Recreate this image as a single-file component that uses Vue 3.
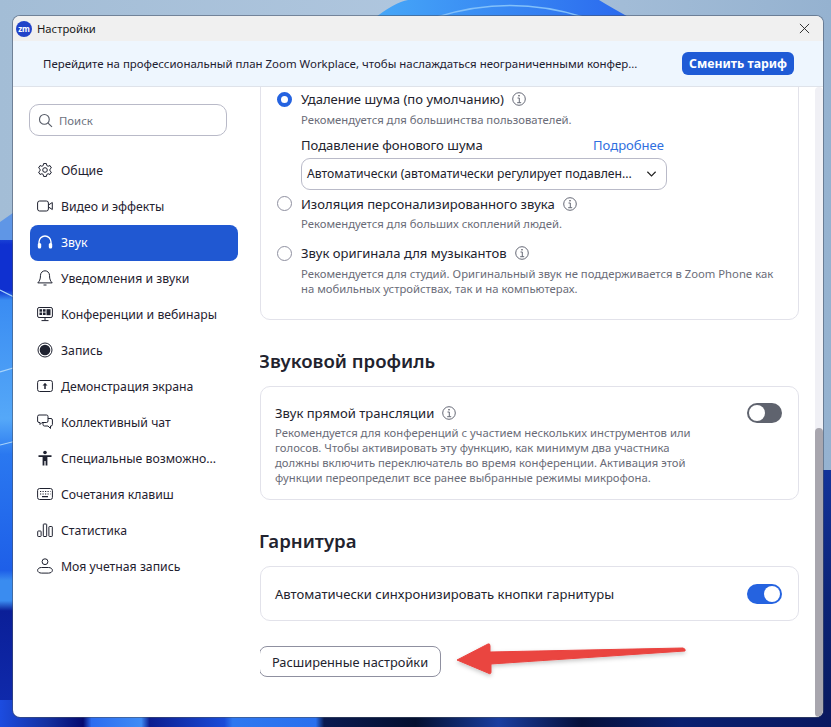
<script setup>
const navItems = [
  { label: 'Общие', icon: 'gear' },
  { label: 'Видео и эффекты', icon: 'video' },
  { label: 'Звук', icon: 'headset', active: true },
  { label: 'Уведомления и звуки', icon: 'bell' },
  { label: 'Конференции и вебинары', icon: 'monitor' },
  { label: 'Запись', icon: 'record' },
  { label: 'Демонстрация экрана', icon: 'share' },
  { label: 'Коллективный чат', icon: 'chat' },
  { label: 'Специальные возможно...', icon: 'access' },
  { label: 'Сочетания клавиш', icon: 'keyboard' },
  { label: 'Статистика', icon: 'stats' },
  { label: 'Моя учетная запись', icon: 'user' },
]
</script>

<template>
  <div class="desktop">
    <svg class="wallpaper" viewBox="0 0 831 727" preserveAspectRatio="none" aria-hidden="true">
      <defs>
        <linearGradient id="sky" x1="0" y1="0" x2="1" y2="0">
          <stop offset="0" stop-color="#a3bdd6" />
          <stop offset="0.5" stop-color="#afc6de" />
          <stop offset="1" stop-color="#95b2d0" />
        </linearGradient>
        <linearGradient id="bloom" x1="0" y1="0" x2="1" y2="0">
          <stop offset="0" stop-color="#46a8f8" />
          <stop offset="1" stop-color="#2a68ee" />
        </linearGradient>
        <linearGradient id="lower" x1="0" y1="0" x2="1" y2="0">
          <stop offset="0" stop-color="#1c4ce0" />
          <stop offset="0.058" stop-color="#14309f" />
          <stop offset="0.1" stop-color="#050a70" />
          <stop offset="0.11" stop-color="#2c6cf0" />
          <stop offset="0.17" stop-color="#3f8cf5" />
          <stop offset="0.18" stop-color="#0d1e90" />
          <stop offset="0.27" stop-color="#1a4cd8" />
          <stop offset="0.28" stop-color="#2e78f0" />
          <stop offset="0.38" stop-color="#2a70ee" />
          <stop offset="0.39" stop-color="#0a1a50" />
          <stop offset="0.5" stop-color="#041030" />
          <stop offset="0.6" stop-color="#1a3ea0" />
          <stop offset="0.7" stop-color="#06103a" />
          <stop offset="0.82" stop-color="#0a2070" />
          <stop offset="1" stop-color="#0a1860" />
        </linearGradient>
        <linearGradient id="leftBand" x1="0" y1="0" x2="0" y2="1">
          <stop offset="0" stop-color="#3c7fe8" />
          <stop offset="0.045" stop-color="#0f30d0" />
          <stop offset="0.135" stop-color="#0f30d0" />
          <stop offset="0.155" stop-color="#3a8cf2" />
          <stop offset="0.39" stop-color="#55a8f8" />
          <stop offset="0.46" stop-color="#2a78f0" />
          <stop offset="0.69" stop-color="#1e5fe8" />
          <stop offset="0.71" stop-color="#3a8cf0" />
          <stop offset="0.75" stop-color="#3a8cf0" />
          <stop offset="0.77" stop-color="#0b1f98" />
          <stop offset="1" stop-color="#102cb0" />
        </linearGradient>
        <linearGradient id="rightBand" x1="0" y1="0" x2="0" y2="1">
          <stop offset="0" stop-color="#14339a" />
          <stop offset="0.5" stop-color="#0c2478" />
          <stop offset="1" stop-color="#081a5e" />
        </linearGradient>
      </defs>
      <rect width="831" height="727" fill="url(#sky)" />
      <path d="M372 20 Q 395 2 408 0 L 599 0 Q 612 8 634 20 Z" fill="url(#bloom)" />
      <path d="M437 17 Q 510 -6 583 17" fill="none" stroke="#82c0fa" stroke-width="1.500" />
      <rect x="0" y="222" width="20" height="505" fill="url(#leftBand)" />
      <path d="M0 222 L 20 208 L 20 240 L 0 240 Z" fill="#5f96e6" />
      <path d="M0 290 L 20 300 M0 372 L 20 366 M0 445 L 20 440" stroke="#a8d4fb" stroke-width="1.200" fill="none" />
      <rect x="815" y="470" width="16" height="257" fill="url(#rightBand)" />
      <rect x="0" y="700" width="831" height="27" fill="url(#lower)" />
    </svg>

    <div class="window">
      <header class="titlebar">
        <span class="logo">zm</span>
        <span class="title">Настройки</span>
        <svg class="close" viewBox="0 0 12 12" aria-label="Закрыть"><path d="M1 1l10 10M11 1L1 11" /></svg>
      </header>

      <div class="banner">
        <span class="banner-text">Перейдите на профессиональный план Zoom Workplace, чтобы наслаждаться неограниченными конфер...</span>
        <button class="upgrade">Сменить тариф</button>
      </div>

      <div class="body">
        <aside class="sidebar">
          <div class="search">
            <svg viewBox="0 0 16 16" class="search-icon"><circle cx="6.800" cy="6.800" r="5.200" /><path d="M10.700 10.700l4.200 4.200" /></svg>
            <span>Поиск</span>
          </div>
          <nav class="nav">
            <div v-for="item in navItems" :key="item.label" class="nav-item" :class="{ active: item.active }">
              <svg class="nav-icon" viewBox="0 0 16 16">
                <template v-if="item.icon === 'gear'">
                  <g transform="translate(0 .75)">
                    <path d="M6.600 .8h2.800l.4 2 1.300.7 1.900-.7 1.400 2.400-1.500 1.300v1.500l1.500 1.300-1.400 2.400-1.900-.7-1.300.7-.4 2H6.600l-.4-2-1.300-.7-1.900.7L1.600 9.300l1.500-1.300V6.500L1.600 5.200 3 2.800l1.900.7 1.300-.7z" />
                    <circle cx="8" cy="7.250" r="2.300" />
                  </g>
                </template>
                <template v-else-if="item.icon === 'video'">
                  <rect x=".6" y="3" width="10.800" height="10" rx="2" />
                  <path d="M11.500 7l3.800-2.500v7L11.500 9" />
                </template>
                <template v-else-if="item.icon === 'headset'">
                  <path d="M2 10V8a6 6 0 0 1 12 0v2" stroke-width="1.400" />
                  <rect x=".8" y="9" width="3.400" height="5.500" rx="1.500" class="solid" />
                  <rect x="11.800" y="9" width="3.400" height="5.500" rx="1.500" class="solid" />
                </template>
                <template v-else-if="item.icon === 'bell'">
                  <path d="M8 .8a4.500 4.500 0 0 0-4.500 4.500c0 4.400-1.200 5.900-2.700 7.600h14.400c-1.500-1.700-2.700-3.200-2.700-7.600A4.500 4.500 0 0 0 8 .8z" />
                  <path d="M6.500 15h3" />
                </template>
                <template v-else-if="item.icon === 'monitor'">
                  <rect x=".6" y="1.500" width="14.800" height="10" rx="1.500" />
                  <rect x="2.500" y="3.200" width="2.600" height="2.500" class="solid" />
                  <rect x="6" y="3.200" width="2.600" height="2.500" class="solid" />
                  <rect x="9.500" y="3.200" width="4" height="6" class="solid" />
                  <rect x="2.500" y="6.500" width="2.600" height="2.500" class="solid" />
                  <rect x="6" y="6.500" width="2.600" height="2.500" class="solid" />
                  <path d="M8 11.500v3M4.500 14.600h7" />
                </template>
                <template v-else-if="item.icon === 'record'">
                  <circle cx="8" cy="8" r="7" />
                  <circle cx="8" cy="8" r="5.300" class="solid" />
                </template>
                <template v-else-if="item.icon === 'share'">
                  <rect x=".6" y="2.500" width="14.800" height="11" rx="2" />
                  <path d="M8 11V5.800" stroke-width="1.500" />
                  <path d="M5.500 7.500L8 5l2.500 2.500z" class="solid" />
                </template>
                <template v-else-if="item.icon === 'chat'">
                  <path d="M2 1h7.500A1.500 1.500 0 0 1 11 2.500V7a1.500 1.500 0 0 1-1.500 1.500H5L3 10.500v-2H2A1.500 1.500 0 0 1 .6 7V2.500A1.500 1.500 0 0 1 2 1z" />
                  <path d="M11 4.500h3A1.500 1.500 0 0 1 15.400 6v4.500A1.500 1.500 0 0 1 14 12h-.5v2.500L11 12H7.500A1.500 1.500 0 0 1 6 10.500V9" />
                </template>
                <template v-else-if="item.icon === 'access'">
                  <circle cx="8" cy="2.500" r="1.800" class="solid" />
                  <path d="M1.500 5.200h13v1.700H10.400V15.500H8.600V11H7.400v4.500H5.600V6.900H1.500z" class="solid" />
                </template>
                <template v-else-if="item.icon === 'keyboard'">
                  <rect x=".6" y="2.500" width="14.800" height="11" rx="2" />
                  <path d="M3 5.500h1.200M5.500 5.500h1.200M8 5.500h1.200M10.500 5.500h1.200M13 5.500h.5M3 8h1.200M5.500 8h1.200M8 8h1.200M10.500 8h1.200M13 8h.5M5 10.700h6" stroke-width="1.200" />
                </template>
                <template v-else-if="item.icon === 'stats'">
                  <rect x=".7" y="9" width="3.400" height="5.500" rx=".6" />
                  <rect x="6.300" y="2" width="3.400" height="12.500" rx=".6" />
                  <rect x="11.900" y="4.500" width="3.400" height="10" rx=".6" />
                </template>
                <template v-else>
                  <circle cx="8" cy="3.700" r="2.900" />
                  <path d="M4.500 9.500h7c2.200 0 3.900 1.200 3.900 2.800s-1.700 2.800-3.900 2.800h-7C2.300 15.100.6 13.900.6 12.300S2.300 9.500 4.500 9.500z" />
                </template>
              </svg>
              <span>{{ item.label }}</span>
            </div>
          </nav>
        </aside>

        <main class="content">
          <section class="card card-clipped">
            <div class="option">
              <span class="radio checked"></span>
              <div class="option-line">
                <span class="label">Удаление шума (по умолчанию)</span>
                <svg class="info" viewBox="0 0 14 14"><circle cx="7" cy="7" r="6.300" /><path d="M5.500 6h1.800v4.500M5.200 10.700h4" /><circle cx="7" cy="3.800" r=".7" class="solid" /></svg>
              </div>
            </div>
            <p class="hint hint-near">Рекомендуется для большинства пользователей.</p>
            <div class="suppress">
              <div class="suppress-head">
                <span class="label">Подавление фонового шума</span>
                <a class="more">Подробнее</a>
              </div>
              <div class="select">
                <span>Автоматически (автоматически регулирует подавлен...</span>
                <svg viewBox="0 0 12 8" class="chev"><path d="M1.500 1.500L6 6l4.500-4.500" /></svg>
              </div>
            </div>
            <div class="option opt-iso">
              <span class="radio"></span>
              <div class="option-line">
                <span class="label">Изоляция персонализированного звука</span>
                <svg class="info" viewBox="0 0 14 14"><circle cx="7" cy="7" r="6.300" /><path d="M5.500 6h1.800v4.500M5.200 10.700h4" /><circle cx="7" cy="3.800" r=".7" class="solid" /></svg>
              </div>
            </div>
            <p class="hint hint-near">Рекомендуется для больших скоплений людей.</p>
            <div class="option opt-orig">
              <span class="radio"></span>
              <div class="option-line">
                <span class="label">Звук оригинала для музыкантов</span>
                <svg class="info" viewBox="0 0 14 14"><circle cx="7" cy="7" r="6.300" /><path d="M5.500 6h1.800v4.500M5.200 10.700h4" /><circle cx="7" cy="3.800" r=".7" class="solid" /></svg>
              </div>
            </div>
            <p class="hint hint-far">Рекомендуется для студий. Оригинальный звук не поддерживается в Zoom Phone как<br />на мобильных устройствах, так и на компьютерах.</p>
          </section>

          <h2 class="heading">Звуковой профиль</h2>
          <section class="card card-live">
            <div class="live-text">
              <div class="option-line">
                <span class="label">Звук прямой трансляции</span>
                <svg class="info" viewBox="0 0 14 14"><circle cx="7" cy="7" r="6.300" /><path d="M5.500 6h1.800v4.500M5.200 10.700h4" /><circle cx="7" cy="3.800" r=".7" class="solid" /></svg>
              </div>
              <p class="hint live-hint">Рекомендуется для конференций с участием нескольких инструментов или<br />голосов. Чтобы активировать эту функцию, как минимум два участника<br />должны включить переключатель во время конференции. Активация этой<br />функции переопределит все ранее выбранные режимы микрофона.</p>
            </div>
            <span class="toggle"></span>
          </section>

          <h2 class="heading heading-second">Гарнитура</h2>
          <section class="card card-head">
            <span class="label">Автоматически синхронизировать кнопки гарнитуры</span>
            <span class="toggle on"></span>
          </section>

          <button class="advanced">Расширенные настройки</button>
        </main>

        <div class="scrollbar"><div class="thumb"></div></div>
      </div>
    </div>

    <svg class="arrow" viewBox="0 0 831 727" aria-hidden="true">
      <defs>
        <filter id="arrowShadow" x="-10%" y="-30%" width="120%" height="170%">
          <feDropShadow dx="0" dy="2" stdDeviation="2" flood-color="#000" flood-opacity=".22" />
        </filter>
      </defs>
      <path d="M457 660 L 488 644 Q 490 643 490 646 L 490 652 L 683 648 Q 686 649 685 651 L 491 664 L 491 672 Q 491 675 488 673 Z" fill="#ea4440" stroke="#ea4440" stroke-linejoin="round" filter="url(#arrowShadow)" />
    </svg>
  </div>
</template>

<style scoped>
.desktop {
  position: relative;
  width: 831px;
  height: 727px;
  padding: 16px 8px 10px 13px;
  box-sizing: border-box;
  overflow: hidden;
  font-family: "Noto Sans", "Open Sans", sans-serif;
  color: #1f2230;
}
.wallpaper, .arrow {
  position: absolute;
  left: 0;
  top: 0;
  width: 831px;
  height: 727px;
}
.arrow { pointer-events: none; }
.window {
  position: relative;
  height: 100%;
  display: flex;
  flex-direction: column;
  background: #fff;
  border-radius: 7px;
  overflow: hidden;
  box-shadow: 0 0 0 1px rgba(70, 80, 100, .55);
}
.titlebar {
  height: 25px;
  flex: none;
  display: flex;
  align-items: center;
  padding: 0 13px 0 3px;
  background: #f0f0f0;
  font-size: 11.250px;
}
.logo {
  width: 16px;
  height: 16px;
  border-radius: 50%;
  background: #2143c9;
  color: #fff;
  font-size: 8px;
  line-height: 15px;
  text-align: center;
  font-weight: 700;
  margin-right: 5px;
}
.title { flex: 1; color: #1a1a1a; }
.close {
  width: 11px;
  height: 11px;
  fill: none;
  stroke: #222;
  stroke-width: 1;
}
.banner {
  height: 46px;
  flex: none;
  box-sizing: border-box;
  display: flex;
  align-items: center;
  justify-content: space-between;
  padding: 0 29px 0 30px;
  background: #eef6fe;
  border-bottom: 1px solid #dfe3ea;
}
.banner-text {
  font-size: 11.440px;
  color: #1d2030;
  white-space: nowrap;
}
.upgrade {
  width: 112px;
  height: 23px;
  border: 0;
  border-radius: 6px;
  background: #1f5bd6;
  color: #fff;
  font: 700 12.300px "Noto Sans", sans-serif;
  padding: 0;
}
.body {
  flex: 1;
  display: flex;
  min-height: 0;
}
.sidebar {
  width: 247px;
  flex: none;
  box-sizing: border-box;
  padding: 17px 22px 0 16px;
}
.search {
  width: 198px;
  height: 32px;
  box-sizing: border-box;
  display: flex;
  align-items: center;
  gap: 6px;
  padding-left: 8px;
  border: 1px solid #b9bac8;
  border-radius: 10px;
  font-size: 11.400px;
  color: #6e7280;
}
.search-icon {
  width: 15px;
  height: 15px;
  fill: none;
  stroke: #555a66;
  stroke-width: 1.200;
}
.nav {
  margin-top: 17px;
  margin-left: 1px;
}
.nav-item {
  height: 36px;
  width: 208px;
  box-sizing: border-box;
  display: flex;
  align-items: center;
  gap: 8px;
  padding: 0 0 2px 7px;
  border-radius: 8px;
  font-size: 12.250px;
  color: #1f2230;
  white-space: nowrap;
}
.nav-item.active {
  background: #2058d2;
  color: #fff;
}
.nav-icon {
  width: 16px;
  height: 16px;
  flex: none;
  fill: none;
  stroke: currentColor;
  stroke-width: 1;
}
.solid {
  fill: currentColor;
  stroke: none;
}
.content {
  flex: 1;
  min-width: 0;
  overflow: hidden;
}
.card {
  box-sizing: border-box;
  width: 539px;
  border: 1px solid #e2e2ea;
  border-radius: 10px;
  background: #fff;
}
.card-clipped {
  height: 253px;
  margin-top: -20px;
  padding: 20px 16px 0;
  display: flex;
  flex-direction: column;
}
.option {
  display: flex;
  align-items: center;
  height: 22px;
}
.radio {
  width: 15px;
  height: 15px;
  box-sizing: border-box;
  border: 1px solid #8f90a0;
  border-radius: 50%;
  margin-right: 9px;
  flex: none;
}
.radio.checked {
  border: 4px solid #2563e0;
}
.option-line {
  display: flex;
  align-items: center;
  gap: 8px;
}
.label {
  font-size: 13.050px;
  color: #22232e;
}
.info {
  width: 14px;
  height: 14px;
  flex: none;
  fill: none;
  stroke: #555866;
  stroke-width: .9;
}
.hint {
  margin: 0 0 0 24px;
  font-size: 11.290px;
  line-height: 15px;
  color: #6a6c78;
  white-space: nowrap;
}
.hint-near { margin-top: 1.500px; }
.hint-far { margin-top: 2px; }
.suppress {
  margin: 8px 0 0 24px;
  width: 366px;
}
.suppress-head {
  display: flex;
  justify-content: space-between;
  padding-right: 3px;
  line-height: 20px;
}
.more {
  font-size: 13.050px;
  color: #2f6fe0;
}
.select {
  height: 32px;
  margin-top: 3px;
  box-sizing: border-box;
  display: flex;
  align-items: center;
  justify-content: space-between;
  padding: 0 9px 0 5px;
  border: 1px solid #b9bac8;
  border-radius: 9px;
  font-size: 12.200px;
  color: #22232e;
  white-space: nowrap;
}
.chev {
  width: 11px;
  height: 8px;
  fill: none;
  stroke: #222;
  stroke-width: 1.300;
}
.opt-iso { margin-top: 3px; }
.opt-orig { margin-top: 11px; }
.heading {
  margin: 27px 0 0 -1px;
  line-height: 28px;
  font-size: 18.600px;
  font-weight: 600;
  color: #22232e;
}
.heading-second { margin-top: 27px; }
.card-live {
  height: 114px;
  margin-top: 11px;
  padding: 17px 16px 0 14px;
  display: flex;
  justify-content: space-between;
}
.live-hint {
  margin: 3px 0 0;
}
.toggle {
  position: relative;
  width: 35px;
  height: 20px;
  border-radius: 10px;
  background: #5f636e;
  flex: none;
}
.toggle::after {
  content: "";
  position: absolute;
  left: 2px;
  top: 2px;
  width: 16px;
  height: 16px;
  border-radius: 50%;
  background: #fff;
}
.toggle.on { background: #2563e0; }
.toggle.on::after { left: 17px; }
.card-live .toggle { margin-top: -1px; }
.card-head {
  height: 55px;
  margin-top: 11px;
  padding: 0 16px 0 14px;
  display: flex;
  align-items: center;
  justify-content: space-between;
}
.advanced {
  display: block;
  margin-top: 25px;
  margin-left: -1px;
  width: 182px;
  height: 31px;
  border: 1px solid #8f90a0;
  border-radius: 8px;
  background: #fff;
  font: 12.800px "Noto Sans", sans-serif;
  color: #22232e;
  padding: 0;
}
.scrollbar {
  width: 8px;
  flex: none;
  margin-left: 16px;
  background: #f0f0f5;
  border-radius: 4px 4px 0 0;
  display: flex;
  flex-direction: column;
  justify-content: flex-end;
}
.thumb {
  height: 289px;
  background: #a8a6ae;
  border-radius: 4px;
}
</style>
